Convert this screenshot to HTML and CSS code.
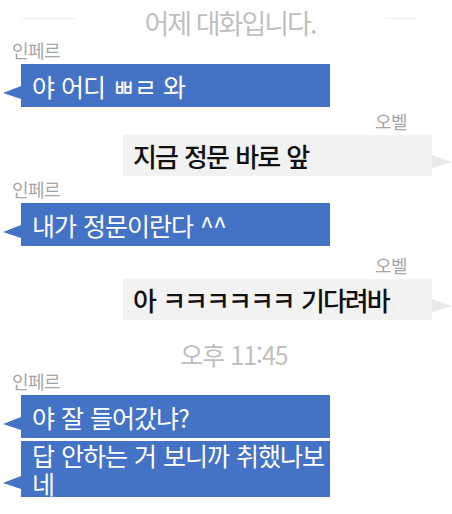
FILE: index.html
```html
<!DOCTYPE html>
<html lang="ko">
  <head>
    <meta charset="UTF-8" />
    <meta name="viewport" content="width=device-width, initial-scale=1.0" />
    <title>대화</title>
    <link rel="stylesheet" href="styles.css">
  </head>
  <body>
    <div class="chat">
      <div class="divider">
        <span class="line line-left"></span>
        <span class="divider-text">어제 대화입니다.</span>
        <span class="line line-right"></span>
      </div>

      <div class="msg msg-left">
        <div class="name">인페르</div>
        <div class="bubble">야 어디 ㅃㄹ 와</div>
      </div>

      <div class="msg msg-right gap-s">
        <div class="name">오벨</div>
        <div class="bubble">지금 정문 바로 앞</div>
      </div>

      <div class="msg msg-left gap-xs">
        <div class="name">인페르</div>
        <div class="bubble">내가 정문이란다 ^^</div>
      </div>

      <div class="msg msg-right gap-m">
        <div class="name">오벨</div>
        <div class="bubble">아 ㅋㅋㅋㅋㅋㅋ 기다려바</div>
      </div>

      <div class="time">오후 11:45</div>

      <div class="msg msg-left">
        <div class="name">인페르</div>
        <div class="bubble">야 잘 들어갔냐?</div>
        <div class="bubble">답 안하는 거 보니까 취했나보네</div>
      </div>
    </div>
  </body>
</html>
```

FILE: styles.css
```css
body {
  margin: 0;
  background-color: #fff;
  font-family: "Noto Sans CJK KR", "Noto Sans", sans-serif;
}
.chat {
  width: 452px;
  display: flex;
  flex-direction: column;
}

/* 날짜 구분선 */
.divider {
  display: flex;
  height: 40px;
}
.line {
  height: 1px;
  margin-top: 18px;
  background-color: #eeeeee;
}
.line-left {
  width: 53px;
  margin-left: 22px;
}
.line-right {
  width: 33px;
  margin-right: 34px;
}
.divider-text {
  flex: 1;
  text-align: center;
  padding-top: 6px;
  line-height: 34px;
  font-size: 27px;
  letter-spacing: -2px;
  color: #bfbfbf;
}

/* 메시지 */
.msg {
  display: flex;
  flex-direction: column;
}
.gap-xs {
  margin-top: 3px;
}
.gap-s {
  margin-top: 4px;
}
.gap-m {
  margin-top: 9px;
}
.name {
  font-size: 18px;
  line-height: 21px;
  letter-spacing: -0.5px;
  color: #a6a6a6;
}
.bubble {
  position: relative;
  box-sizing: border-box;
  width: 309px;
  min-height: 43px;
  margin-top: 3px;
  display: flex;
  align-items: center;
  line-height: 28px;
}
.bubble::before {
  content: "";
  position: absolute;
  bottom: 8px;
  border-top: 7px solid transparent;
  border-bottom: 6px solid transparent;
}

.msg-left .name {
  padding-left: 12px;
}
.msg-left .bubble {
  margin-left: 21px;
  padding: 0 4px 0 11px;
  background-color: #4472c4;
  color: #fff;
  font-size: 25px;
  letter-spacing: -1px;
  word-spacing: 1px;
}
.msg-left .bubble::before {
  left: -18px;
  border-right: 18px solid #4472c4;
}

.msg-right .name {
  text-align: right;
  padding-right: 45px;
}
.msg-right .bubble {
  margin-left: 123px;
  min-height: 41px;
  padding: 0 10px;
  background-color: #f2f2f2;
  color: #111;
  font-size: 26px;
  font-weight: 500;
  letter-spacing: -2px;
  word-spacing: 2px;
}
.msg-right .bubble::before {
  right: -20px;
  border-left: 20px solid #e9e9e9;
}

/* 시간 표시 */
.time {
  margin-top: 18px;
  text-align: center;
  font-size: 25px;
  line-height: 33px;
  letter-spacing: -1px;
  color: #bfbfbf;
  padding-left: 16px;
}
```
